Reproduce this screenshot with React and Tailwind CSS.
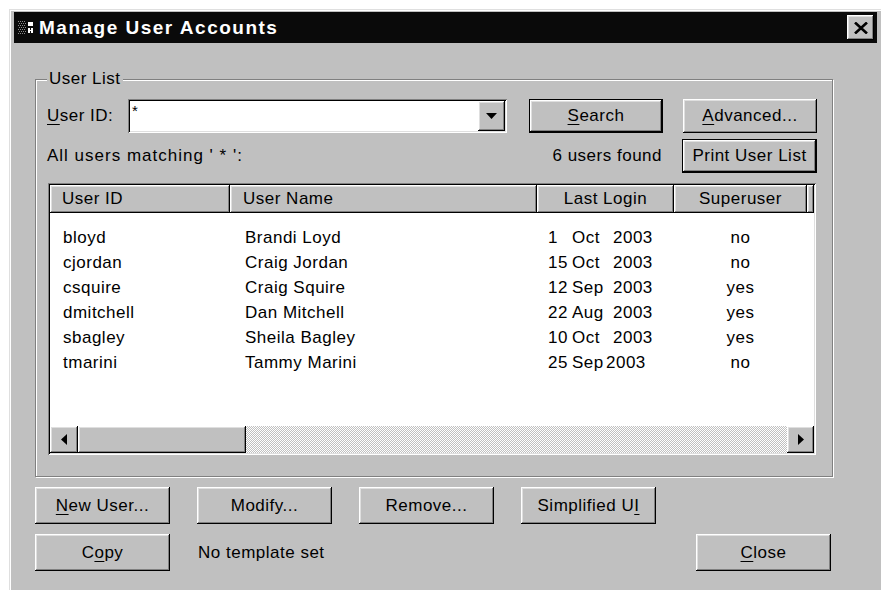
import React from "react";

const raised =
  "bg-[#c0c0c0] shadow-[inset_-1px_-1px_0_#000,inset_1px_1px_0_#fff,inset_-2px_-2px_0_#808080,inset_2px_2px_0_#dfdfdf]";
const sunken =
  "shadow-[inset_1px_1px_0_#808080,inset_-1px_-1px_0_#fff,inset_2px_2px_0_#000,inset_-2px_-2px_0_#dfdfdf]";

function Btn({ children, className = "", isDefault = false }) {
  if (isDefault) {
    return (
      <div className={`border border-black ${className}`}>
        <div className={`w-full h-full flex items-center justify-center ${raised}`}>{children}</div>
      </div>
    );
  }
  return <div className={`flex items-center justify-center ${raised} ${className}`}>{children}</div>;
}

const Key = ({ children }) => <span className="underline underline-offset-[3px] decoration-1">{children}</span>;

const users = [
  { id: "bloyd", name: "Brandi Loyd", day: "1", mon: "Oct", year: "2003", su: "no" },
  { id: "cjordan", name: "Craig Jordan", day: "15", mon: "Oct", year: "2003", su: "no" },
  { id: "csquire", name: "Craig Squire", day: "12", mon: "Sep", year: "2003", su: "yes" },
  { id: "dmitchell", name: "Dan Mitchell", day: "22", mon: "Aug", year: "2003", su: "yes" },
  { id: "sbagley", name: "Sheila Bagley", day: "10", mon: "Oct", year: "2003", su: "yes" },
  { id: "tmarini", name: "Tammy Marini", day: "25", mon: "Sep", year: "2003", su: "no", tight: true },
];

function AppIcon() {
  // little dithered window glyph in the caption
  const dots = [];
  for (let y = 0; y < 14; y += 2) {
    for (let x = 0; x < 8; x += 2) {
      dots.push(<rect key={`${x}-${y}`} x={x + (y % 4 ? 1 : 0)} y={y} width="1" height="1" fill="#8a8a8a" />);
    }
  }
  return (
    <svg width="17" height="14" viewBox="0 0 17 14">
      {dots}
      <rect x="10" y="1" width="5" height="4" fill="#fff" />
      <rect x="10" y="7" width="2" height="5" fill="#fff" />
      <rect x="13" y="7" width="2" height="5" fill="#fff" />
      <rect x="12" y="9" width="1" height="1" fill="#fff" />
    </svg>
  );
}

export default function App() {
  return (
    <div className="h-[590px] overflow-hidden bg-white pt-[9px] pl-[9px] font-['Liberation_Sans',Arial,sans-serif] text-[17px] tracking-[0.5px] text-black">
      <div className="w-[872px] h-[581px] bg-[#c0c0c0] border-l border-t border-[#dfdfdf] shadow-[inset_1px_1px_0_#fff] pl-[4px] pt-[2px] pr-[4px]">
        {/* caption */}
        <div className="h-[31px] bg-[#0a0a0a] flex items-center pl-[4px] pr-[3px]">
          <AppIcon />
          <span className="ml-[4px] text-white font-bold text-[19px] tracking-[1.5px] leading-none">
            Manage User Accounts
          </span>
          <div className={`ml-auto w-[27px] h-[25px] flex items-center justify-center ${raised}`}>
            <svg width="14" height="12" viewBox="0 0 14 12">
              <path d="M1 0.5 L13 11.5 M13 0.5 L1 11.5" stroke="#000" strokeWidth="2.6" />
            </svg>
          </div>
        </div>

        {/* User List group */}
        <div className="relative ml-[21px] mt-[36px] w-[798px] border border-[#808080] shadow-[inset_1px_1px_0_#fff,1px_1px_0_#fff] pt-[19px] pl-[11px] pr-[15px] pb-[21px]">
          <span className="absolute left-[11px] top-[-10px] px-[2px] bg-[#c0c0c0] leading-[18px]">User List</span>

          <div className="flex items-center h-[34px]">
            <span className="w-[81px]">
              <Key>U</Key>ser ID:
            </span>
            <div className={`w-[379px] h-[34px] bg-white flex items-stretch p-[2px] ${sunken}`}>
              <span className="flex-1 pl-[2px] text-[15px] leading-[20px]">*</span>
              <div className={`w-[27px] flex items-center justify-center ${raised}`}>
                <svg width="11" height="6" viewBox="0 0 11 6">
                  <path d="M0 0 H11 L5.5 6 Z" fill="#000" />
                </svg>
              </div>
            </div>
            <Btn isDefault className="ml-[22px] w-[134px] h-[34px]">
              <span>
                <Key>S</Key>earch
              </span>
            </Btn>
            <Btn className="ml-[20px] w-[134px] h-[34px]">
              <span>
                <Key>A</Key>dvanced...
              </span>
            </Btn>
          </div>

          <div className="flex items-center h-[34px] mt-[6px]">
            <span className="flex-1 whitespace-pre tracking-[1px]">All users matching ' * ':</span>
            <span>6 users found</span>
            <Btn isDefault className="ml-[20px] w-[135px] h-[34px]">
              Print User List
            </Btn>
          </div>

          {/* user list view */}
          <div className={`mt-[10px] ml-[1px] w-[768px] h-[272px] bg-white p-[2px] flex flex-col ${sunken}`}>
            <div className="h-[28px] flex shrink-0">
              <div className={`w-[180px] pl-[12px] flex items-center ${raised}`}>User ID</div>
              <div className={`w-[307px] pl-[13px] flex items-center ${raised}`}>User Name</div>
              <div className={`w-[137px] flex items-center justify-center ${raised}`}>Last Login</div>
              <div className={`w-[133px] flex items-center justify-center ${raised}`}>Superuser</div>
              <div className={`flex-1 ${raised}`} />
            </div>

            <div className="flex-1 pt-[12px]">
              {users.map((u) => (
                <div key={u.id} className="h-[25px] flex items-center">
                  <span className="w-[180px] pl-[13px]">{u.id}</span>
                  <span className="w-[307px] pl-[15px]">{u.name}</span>
                  <span className="w-[137px] pl-[11px] flex">
                    <span className="w-[24px]">{u.day}</span>
                    <span className={u.tight ? "w-[34px]" : "w-[41px]"}>{u.mon}</span>
                    <span>{u.year}</span>
                  </span>
                  <span className="w-[133px] text-center">{u.su}</span>
                </div>
              ))}
            </div>

            {/* horizontal scroll bar */}
            <div className="h-[27px] flex shrink-0">
              <div className={`w-[28px] flex items-center justify-center ${raised}`}>
                <svg width="6" height="11" viewBox="0 0 6 11">
                  <path d="M6 0 V11 L0 5.5 Z" fill="#000" />
                </svg>
              </div>
              <div className={`w-[168px] ${raised}`} />
              <div className="flex-1 bg-[repeating-conic-gradient(#c0c0c0_0_25%,#fff_0_50%)] bg-[length:2px_2px]" />
              <div className={`w-[27px] flex items-center justify-center ${raised}`}>
                <svg width="6" height="11" viewBox="0 0 6 11">
                  <path d="M0 0 V11 L6 5.5 Z" fill="#000" />
                </svg>
              </div>
            </div>
          </div>
        </div>

        {/* dialog buttons */}
        <div className="ml-[21px] mt-[10px] w-[796px]">
          <div className="flex gap-[27px]">
            <Btn className="w-[135px] h-[37px]">
              <span>
                <Key>N</Key>ew User...
              </span>
            </Btn>
            <Btn className="w-[135px] h-[37px]">Modify...</Btn>
            <Btn className="w-[135px] h-[37px]">Remove...</Btn>
            <Btn className="w-[135px] h-[37px]">
              <span>
                Simplified U<Key>I</Key>
              </span>
            </Btn>
          </div>
          <div className="flex items-center mt-[10px]">
            <Btn className="w-[135px] h-[37px]">
              <span>
                C<Key>o</Key>py
              </span>
            </Btn>
            <span className="ml-[28px]">No template set</span>
            <Btn className="ml-auto w-[135px] h-[37px]">
              <span>
                <Key>C</Key>lose
              </span>
            </Btn>
          </div>
        </div>
      </div>
    </div>
  );
}
